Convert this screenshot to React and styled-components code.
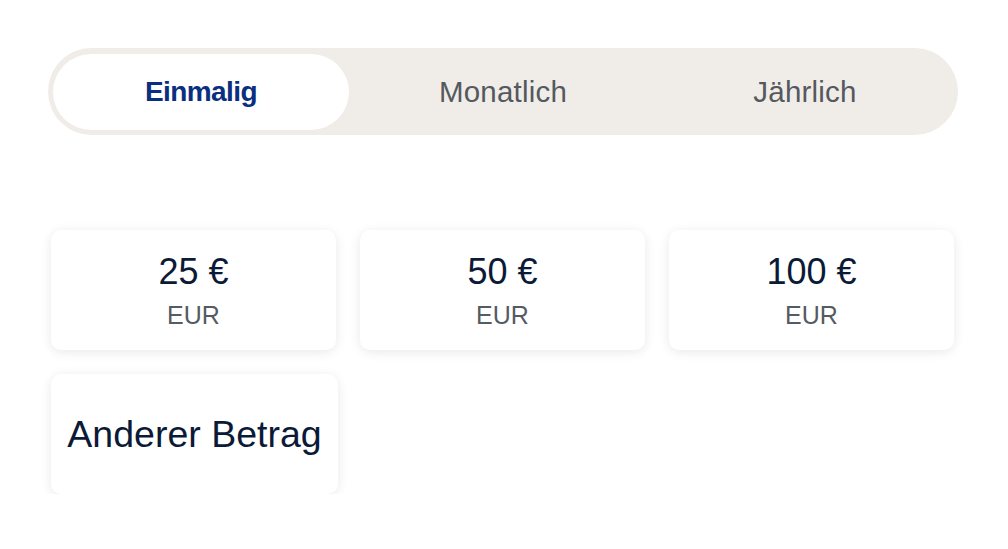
import React, { useState } from "react";
import styled, { createGlobalStyle } from "styled-components";

const GlobalStyle = createGlobalStyle`
  html, body {
    margin: 0;
    padding: 0;
    background: #ffffff;
    font-family: "Liberation Sans", Arial, sans-serif;
  }
`;

const Page = styled.main`
  padding: 48px 50px 0 48px;
  width: 910px;
`;

const Toggle = styled.div`
  display: grid;
  grid-template-columns: repeat(3, 296px);
  column-gap: 6px;
  background: #f0ede9;
  border-radius: 44px;
  padding: 6px 5px 5px 5px;
  height: 76px;
`;

const Tab = styled.button`
  border: none;
  border-radius: 38px;
  background: ${(p) => (p.$active ? "#ffffff" : "transparent")};
  color: ${(p) => (p.$active ? "#0a2f80" : "#55595e")};
  font-family: "Liberation Sans", Arial, sans-serif;
  font-size: ${(p) => (p.$active ? "28px" : "29.5px")};
  font-weight: ${(p) => (p.$active ? 700 : 400)};
  letter-spacing: ${(p) => (p.$active ? "-0.6px" : "0.2px")};
  cursor: pointer;
  padding: 0 0 1px;
`;

const Amounts = styled.div`
  display: grid;
  grid-template-columns: repeat(3, 285px);
  gap: 24px;
  margin: 95px 0 0 3px;
`;

const Card = styled.button`
  width: ${(p) => (p.$wide ? "287px" : "285px")};
  height: 120px;
  border: none;
  border-radius: 10px;
  background: #ffffff;
  box-shadow: 0 2px 12px rgba(0, 0, 0, 0.09);
  display: flex;
  flex-direction: column;
  align-items: center;
  justify-content: center;
  gap: 6px;
  padding: 0;
  cursor: pointer;
  font-family: "Liberation Sans", Arial, sans-serif;
`;

const Amount = styled.span`
  font-size: ${(p) => (p.$large ? "37.5px" : "36px")};
  color: #0b1a36;
  line-height: 44px;
`;

const Currency = styled.span`
  font-size: 25px;
  color: #555b62;
  line-height: 30px;
`;

const tabs = ["Einmalig", "Monatlich", "Jährlich"];
const values = ["25 €", "50 €", "100 €"];

export default function App() {
  const [active, setActive] = useState(0);
  return (
    <>
      <GlobalStyle />
      <Page>
        <Toggle>
          {tabs.map((t, i) => (
            <Tab key={t} $active={active === i} onClick={() => setActive(i)}>
              {t}
            </Tab>
          ))}
        </Toggle>
        <Amounts>
          {values.map((v) => (
            <Card key={v}>
              <Amount>{v}</Amount>
              <Currency>EUR</Currency>
            </Card>
          ))}
          <Card $wide>
            <Amount $large>Anderer Betrag</Amount>
          </Card>
        </Amounts>
      </Page>
    </>
  );
}
